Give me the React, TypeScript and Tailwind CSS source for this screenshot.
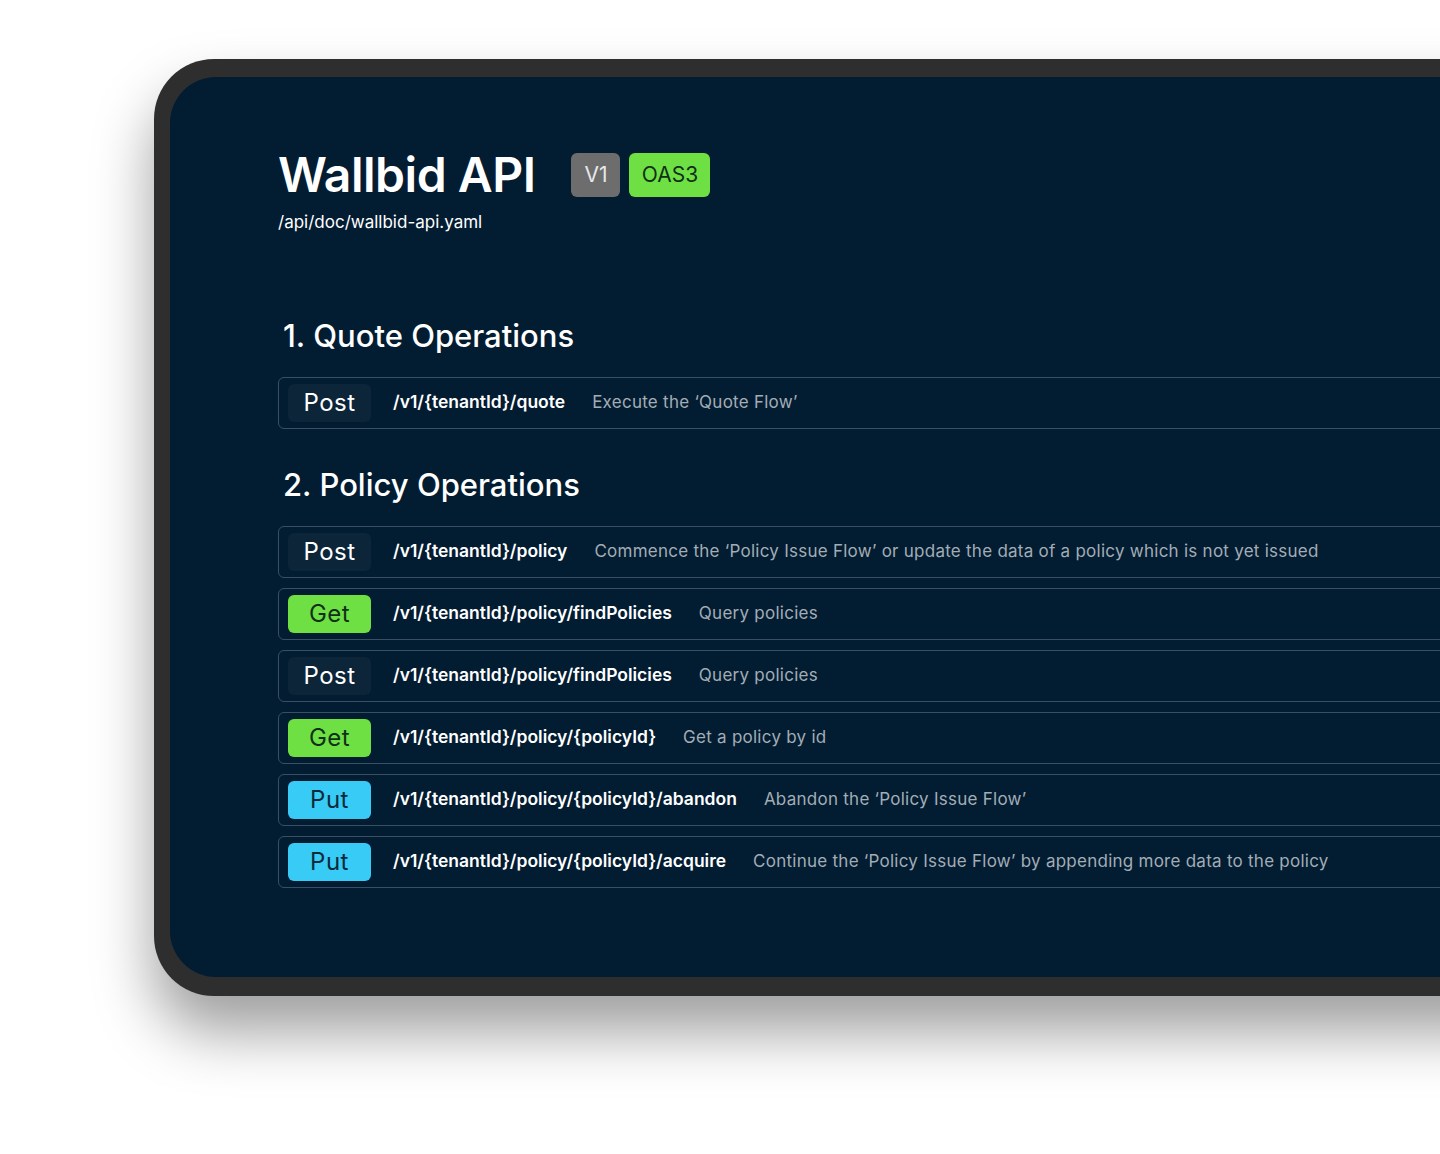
import React from "react";

type Op = { method: "Post" | "Get" | "Put"; path: string; desc: string };

const QUOTE_OPS: Op[] = [
  { method: "Post", path: "/v1/{tenantId}/quote", desc: "Execute the ‘Quote Flow’" },
];

const POLICY_OPS: Op[] = [
  {
    method: "Post",
    path: "/v1/{tenantId}/policy",
    desc: "Commence the ‘Policy Issue Flow’ or update the data of a policy which is not yet issued",
  },
  { method: "Get", path: "/v1/{tenantId}/policy/findPolicies", desc: "Query policies" },
  { method: "Post", path: "/v1/{tenantId}/policy/findPolicies", desc: "Query policies" },
  { method: "Get", path: "/v1/{tenantId}/policy/{policyId}", desc: "Get a policy by id" },
  { method: "Put", path: "/v1/{tenantId}/policy/{policyId}/abandon", desc: "Abandon the ‘Policy Issue Flow’" },
  {
    method: "Put",
    path: "/v1/{tenantId}/policy/{policyId}/acquire",
    desc: "Continue the ‘Policy Issue Flow’ by appending more data to the policy",
  },
];

const METHOD_STYLE: Record<Op["method"], string> = {
  Post: "bg-[#0c2539] text-white",
  Get: "bg-[#6ee043] text-[#10301a]",
  Put: "bg-[#38cbf6] text-[#0a2a3c]",
};

function OpRow({ op }: { op: Op }) {
  return (
    <div className="flex h-[52px] items-center rounded-[6px] border border-[#3a4f61] pl-[9px]">
      <span
        className={`flex h-[38px] w-[83px] shrink-0 items-center justify-center rounded-[6px] text-[24px] tracking-[0.02em] ${METHOD_STYLE[op.method]}`}
      >
        {op.method}
      </span>
      <span className="ml-[22px] whitespace-nowrap text-[17.5px] font-semibold text-white">{op.path}</span>
      <span className="ml-[27px] whitespace-nowrap text-[17px] tracking-[0.015em] text-[#a3adb6]">{op.desc}</span>
    </div>
  );
}

function Section({ title, ops }: { title: string; ops: Op[] }) {
  return (
    <section>
      <h2 className="pl-[5px] text-[31px] font-medium leading-[40px] text-white">{title}</h2>
      <div className="mt-[21px] flex flex-col gap-[10px]">
        {ops.map((op, i) => (
          <OpRow key={i} op={op} />
        ))}
      </div>
    </section>
  );
}

export default function App() {
  return (
    <div
      className="h-[1154px] w-[1440px] overflow-hidden bg-white"
      style={{ fontFamily: "Inter, 'Noto Sans', sans-serif" }}
    >
      <div className="ml-[154px] mt-[59px] w-[1420px] rounded-[60px] bg-[#2e2e2e] pb-[19px] pl-[16px] pt-[18px] shadow-[0_36px_60px_rgba(0,0,0,0.38)]">
        <div className="h-[900px] rounded-[46px] bg-[#021c31] pl-[108px] pr-[60px] pt-[66px]">
          <div className="flex items-center gap-[36px]">
            <h1 className="text-[48px] font-semibold leading-[64px] tracking-[-0.01em] text-white">Wallbid API</h1>
            <div className="flex gap-[9px]">
              <span className="flex h-[44px] w-[49px] items-center justify-center rounded-[6px] bg-[#6d6d6d] text-[21px] text-[#e8e8e8]">
                V1
              </span>
              <span className="flex h-[44px] w-[81px] items-center justify-center rounded-[6px] bg-[#6ee043] text-[21px] text-[#10301a]">
                OAS3
              </span>
            </div>
          </div>
          <p className="mt-[3px] text-[17px] text-white">/api/doc/wallbid-api.yaml</p>

          <div className="mt-[80px] flex flex-col gap-[36px]">
            <Section title="1. Quote Operations" ops={QUOTE_OPS} />
            <Section title="2. Policy Operations" ops={POLICY_OPS} />
          </div>
        </div>
      </div>
    </div>
  );
}
